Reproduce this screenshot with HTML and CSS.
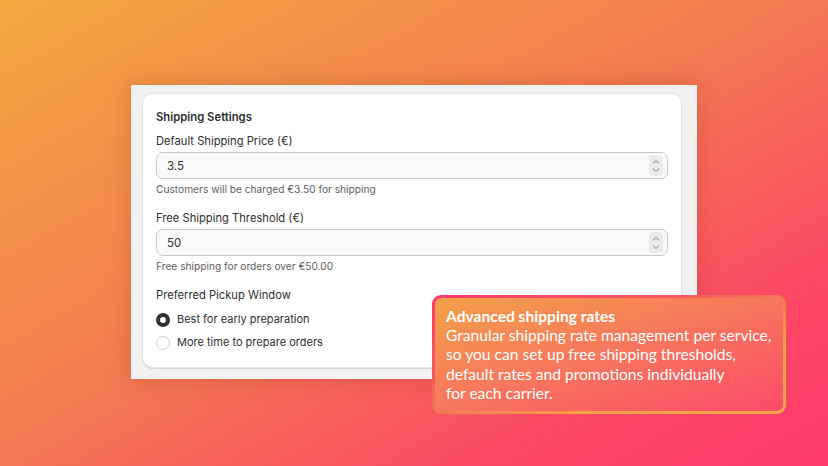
FILE: index.html
```html
<!DOCTYPE html>
<html>
<head>
<meta charset="utf-8">
<link rel="stylesheet" href="styles.css">
</head>
<body>
<div class="stage">
  <div class="panel">
    <div class="card">
      <div class="title">Shipping Settings</div>
      <div class="field">
        <div class="label">Default Shipping Price (€)</div>
        <div class="input"><span>3.5</span>
          <span class="spin"><svg width="10" height="18" viewBox="0 0 10 18"><path d="M2 6.5 L5 3.5 L8 6.5" fill="none" stroke="#777" stroke-width="1"/><path d="M2 11.5 L5 14.5 L8 11.5" fill="none" stroke="#777" stroke-width="1"/></svg></span>
        </div>
        <div class="help">Customers will be charged €3.50 for shipping</div>
      </div>
      <div class="field">
        <div class="label">Free Shipping Threshold (€)</div>
        <div class="input"><span>50</span>
          <span class="spin"><svg width="10" height="18" viewBox="0 0 10 18"><path d="M2 6.5 L5 3.5 L8 6.5" fill="none" stroke="#777" stroke-width="1"/><path d="M2 11.5 L5 14.5 L8 11.5" fill="none" stroke="#777" stroke-width="1"/></svg></span>
        </div>
        <div class="help">Free shipping for orders over €50.00</div>
      </div>
      <div class="field last">
        <div class="label">Preferred Pickup Window</div>
        <div class="radios">
          <div class="radio"><span class="dot on"></span>Best for early preparation</div>
          <div class="radio"><span class="dot"></span>More time to prepare orders</div>
        </div>
      </div>
    </div>
  </div>
  <div class="callout">
    <div class="callout-title">Advanced shipping rates</div>
    <div class="callout-body">Granular shipping rate management per service,<br>so you can set up free shipping thresholds,<br>default rates and promotions individually<br>for each carrier.</div>
  </div>
</div>
</body>
</html>
```
FILE: styles.css
```css
html, body {
  margin: 0;
  padding: 0;
}
body {
  width: 828px;
  height: 466px;
  overflow: hidden;
  font-family: Inter, "Noto Sans", sans-serif;
}
.stage {
  position: relative;
  width: 828px;
  height: 466px;
  box-sizing: border-box;
  padding: 85px 0 0 131px;
  background: linear-gradient(to bottom right, #f3a83f 0%, #f47a52 48%, #fb4a64 78%, #fe3a6c 100%);
}
.panel {
  width: 566px;
  height: 294px;
  box-sizing: border-box;
  background: #f1f1f1;
  padding: 8px 15px 11px 11px;
  box-shadow: 0 0 22px rgba(150, 50, 20, 0.28);
}
.card {
  height: 100%;
  box-sizing: border-box;
  background: #fff;
  border-radius: 11px;
  border: 1px solid #e6e6e6;
  box-shadow: 0 1px 0 #d6d6d6;
  padding: 15px 13px 0 13px;
  color: #303030;
}
.title {
  font-size: 11.3px;
  font-weight: 600;
  line-height: 16px;
  margin-bottom: 8px;
}
.label {
  font-size: 11.2px;
  line-height: 16px;
  margin-bottom: 3px;
}
.input {
  height: 27px;
  box-sizing: border-box;
  border: 1px solid #c9c9c9;
  border-radius: 7px;
  background: #fafafa;
  display: flex;
  align-items: center;
  justify-content: space-between;
  padding: 0 4px 0 10px;
  font-size: 11.5px;
  color: #303030;
}
.spin {
  width: 14px;
  height: 21px;
  background: #ececec;
  border-radius: 3px;
  display: flex;
  align-items: center;
  justify-content: center;
}
.help {
  font-size: 10.2px;
  color: #616161;
  line-height: 14px;
  margin-top: 3px;
  margin-bottom: 14px;
}
.radios {
  display: flex;
  flex-direction: column;
  gap: 8px;
  margin-top: 9px;
}
.radio {
  display: flex;
  align-items: center;
  gap: 7px;
  font-size: 11px;
  line-height: 15px;
}
.dot {
  width: 14px;
  height: 14px;
  box-sizing: border-box;
  border-radius: 50%;
  border: 1px solid #cfcfcf;
  background: #fff;
}
.dot.on {
  border: 4px solid #303030;
}
.callout {
  position: absolute;
  left: 432px;
  top: 295px;
  width: 354px;
  height: 119px;
  box-sizing: border-box;
  border: 3px solid transparent;
  border-radius: 9px;
  background:
    linear-gradient(to bottom right, #f3a148, #f77a5b 45%, #fb4b6a 100%) padding-box,
    linear-gradient(to bottom right, #fb3a6a 0%, #f55a5e 35%, #f1a148 70%, #f1a446 100%) border-box;
  padding: 8px 11px 0 11px;
  color: #fff;
  font-family: Lato, Inter, sans-serif;
}
.callout-title {
  font-size: 15.6px;
  font-weight: 700;
  line-height: 20px;
}
.callout-body {
  font-size: 15.6px;
  line-height: 19.3px;
}
```
